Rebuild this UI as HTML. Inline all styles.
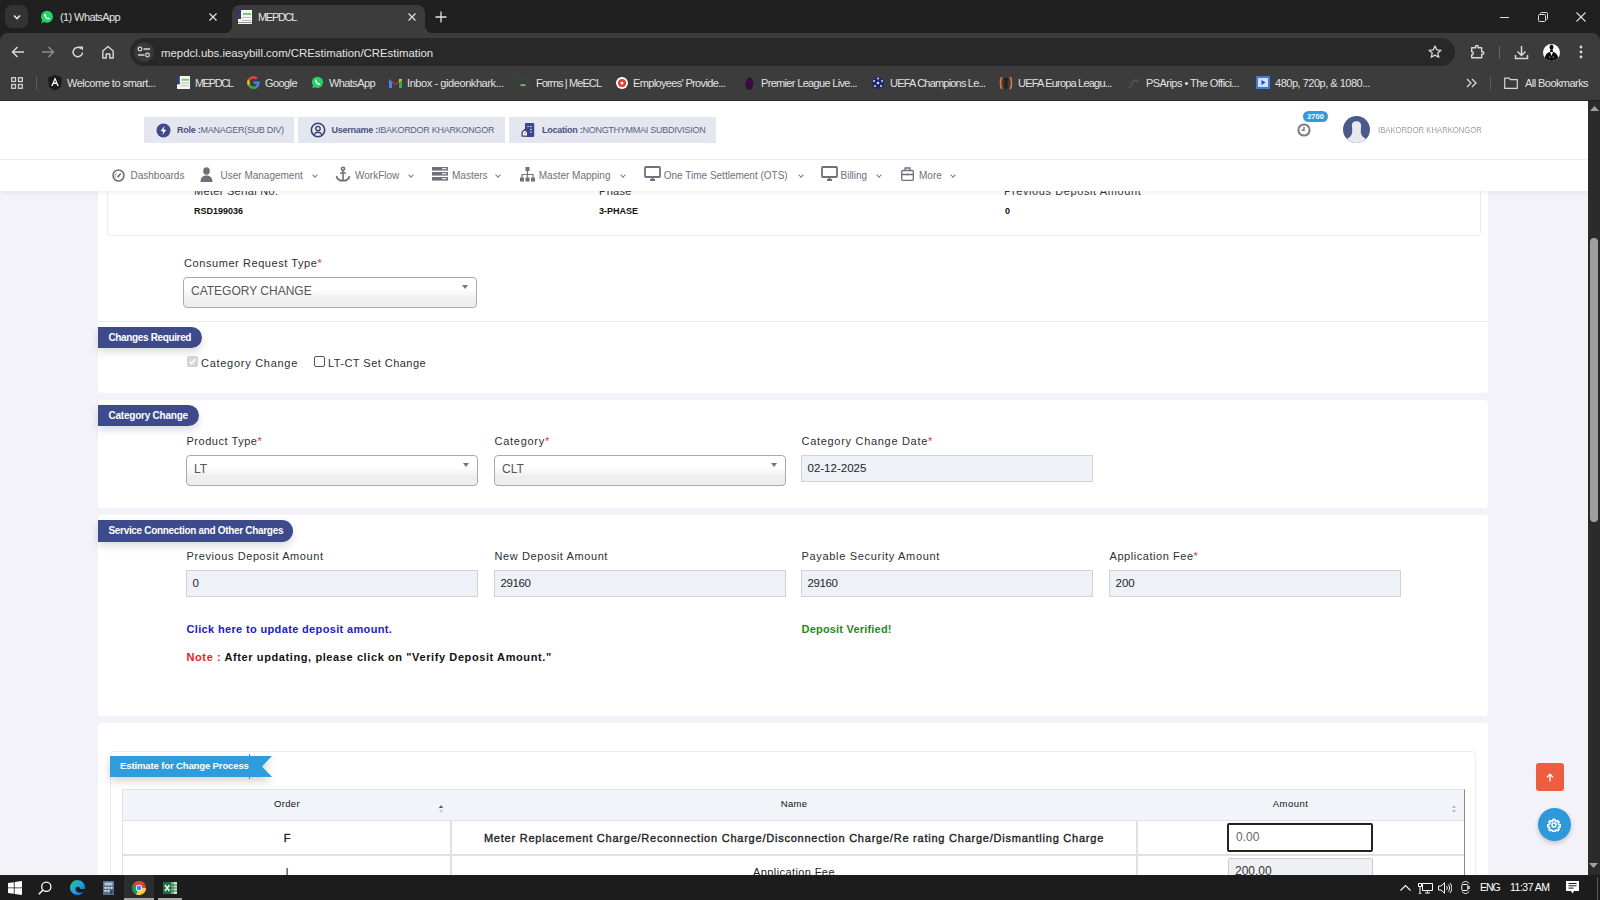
<!DOCTYPE html>
<html><head><meta charset="utf-8">
<style>
*{margin:0;padding:0;box-sizing:border-box}
html,body{width:1600px;height:900px;overflow:hidden;background:#202020;font-family:"Liberation Sans",sans-serif}
.a{position:absolute}
#tabs{left:0;top:0;width:1600px;height:33px;background:#202020}
#tool{left:0;top:33px;width:1600px;height:67px;background:#3c3c3c;border-radius:8px 8px 0 0}
.tt{color:#e3e3e3;font-size:11px;white-space:nowrap;line-height:16px}
.tx{color:#e0e0e0;font-size:11px;line-height:14px}
.bm{color:#e3e3e3;font-size:11px;white-space:nowrap;line-height:14px}
#page{left:0;top:100px;width:1588px;height:775px;background:#f3f2f8;overflow:hidden}
#sb{left:1588px;top:101px;width:12px;height:774px;background:#2b2b2b}
#task{left:0;top:875px;width:1600px;height:25px;background:#1c1c1c}
.card{position:absolute;background:#fff}
.lbl{position:absolute;font-size:11.5px;color:#2c3036;white-space:nowrap;line-height:14px}
.req{color:#e3342f}
.inp{position:absolute;background:#eef1f5;border:1px solid #ced4da;font-size:11.5px;color:#212529;padding-left:5.5px;white-space:nowrap}
.sel{position:absolute;background:linear-gradient(#fff 35%,#eeeeee 75%);border:1px solid #aaa;border-radius:4px;font-size:12px;color:#555;padding-left:7px;white-space:nowrap}
.pill{position:absolute;background:#3d4b8c;color:#fff;font-weight:bold;font-size:10px;border-radius:0 11px 11px 0;white-space:nowrap;box-shadow:0 4px 8px rgba(0,0,0,.15)}
.nav{position:absolute;font-size:10px;color:#6e717c;white-space:nowrap;line-height:14px}
.caret{width:0;height:0;border-left:3px solid transparent;border-right:3px solid transparent;border-top:4.5px solid #777}
.cb{width:11px;height:11px;border:1px solid #555;border-radius:2px;background:#fff}
.cb.dis{border-color:#d0d0d0;background:#d6d6d6}
.ribbon{background:#2f9ddc;clip-path:polygon(0 0,100% 0,93.8% 50%,100% 100%,0 100%)}
.th{font-size:9.5px;color:#1a1a1a;-webkit-text-stroke:0.05px #111;text-align:center;line-height:14px;letter-spacing:0.3px}
.td{font-size:11px;color:#222;text-align:center;line-height:16px;white-space:nowrap}
.sort{width:5px;height:9px;background:linear-gradient(#555 0 30%,transparent 30% 70%,#bbb 70%)}
.badge{top:117px;height:26px;background:#e5e7f0}
.bt{font-size:9px;color:#5a5f80;white-space:nowrap;line-height:14px}
.bt b{color:#4a5080}
.chev{width:4px;height:4px;border-right:1.1px solid #7a7d88;border-bottom:1.1px solid #7a7d88;transform:rotate(45deg)}
</style></head><body>
<!-- TAB STRIP -->
<div id="tabs" class="a"></div>
<div class="a" style="left:5px;top:5px;width:23px;height:23px;border-radius:7px;background:#333"></div>
<svg class="a" style="left:11px;top:11px" width="12" height="12" viewBox="0 0 12 12"><path d="M3 4.5l3 3 3-3" stroke="#e8e8e8" stroke-width="1.6" fill="none"/></svg>
<!-- whatsapp tab -->
<svg class="a" style="left:40px;top:10px" width="14" height="14" viewBox="0 0 14 14"><circle cx="7" cy="6.8" r="6" fill="#25d366"/><path d="M1.2 13.2l1.2-3.2 2 2z" fill="#25d366"/><path d="M4.6 4.2c.4-.6.9-.5 1.1 0l.5 1c.1.3-.3.6-.4.8.4.9 1.2 1.6 2 2 .2-.2.5-.6.8-.5l1 .5c.4.2.4.7 0 1.1-.6.6-1.5.6-2.4.1-1.2-.7-2.2-1.7-2.8-2.9-.3-.8-.3-1.5.2-2.1z" fill="#fff"/></svg>
<div class="a tt" style="left:60px;top:9px;letter-spacing:-0.6px">(1) WhatsApp</div>
<svg class="a" style="left:209px;top:13px" width="8" height="8" viewBox="0 0 8 8"><path d="M.5 .5l7 7M7.5 .5l-7 7" stroke="#e0e0e0" stroke-width="1.2"/></svg>
<!-- active tab -->
<div class="a" style="left:232px;top:5px;width:193px;height:29px;border-radius:8px 8px 0 0;background:#3c3c3c"></div>
<div class="a" style="left:224px;top:25px;width:8px;height:8px;background:radial-gradient(circle at 0 0,#202020 8px,#3c3c3c 8.5px)"></div>
<div class="a" style="left:425px;top:25px;width:8px;height:8px;background:radial-gradient(circle at 8px 0,#202020 8px,#3c3c3c 8.5px)"></div>
<svg class="a" style="left:238px;top:10px" width="14" height="14" viewBox="0 0 14 14"><rect x="0" y="0" width="14" height="14" fill="#f4f4f0"/><rect x="0" y="0" width="3" height="9" fill="#2a3a7a"/><rect x="5" y="3" width="8" height="2" fill="#7cc46a"/><rect x="4" y="7" width="9" height="1" fill="#bbb"/><rect x="4" y="10" width="9" height="1" fill="#bbb"/><rect x="0" y="12" width="14" height="1" fill="#999"/></svg>
<div class="a tt" style="left:258px;top:9px;color:#e8e8e8;letter-spacing:-1.3px">MEPDCL</div>
<svg class="a" style="left:408px;top:13px" width="8" height="8" viewBox="0 0 8 8"><path d="M.5 .5l7 7M7.5 .5l-7 7" stroke="#e0e0e0" stroke-width="1.2"/></svg>
<svg class="a" style="left:435px;top:11px" width="12" height="12" viewBox="0 0 12 12"><path d="M6 .5v11M.5 6h11" stroke="#e3e3e3" stroke-width="1.3"/></svg>
<!-- window controls -->
<div class="a" style="left:1500px;top:17px;width:9px;height:1px;background:#ddd"></div>
<svg class="a" style="left:1538px;top:12px" width="10" height="10" viewBox="0 0 10 10"><rect x="0.5" y="2.5" width="7" height="7" rx="1" stroke="#ddd" fill="none"/><path d="M2.5 2.5v-1a1 1 0 0 1 1-1h5a1 1 0 0 1 1 1v5a1 1 0 0 1-1 1h-1" stroke="#ddd" fill="none"/></svg>
<svg class="a" style="left:1576px;top:12px" width="10" height="10" viewBox="0 0 10 10"><path d="M.5 .5l9 9M9.5 .5l-9 9" stroke="#ddd" stroke-width="1.1"/></svg>
<!-- TOOLBAR -->
<div id="tool" class="a"></div>
<svg class="a" style="left:11px;top:46px" width="14" height="12" viewBox="0 0 14 12"><path d="M13 6H1.5M6.5 1L1.5 6l5 5" stroke="#d8d8d8" stroke-width="1.5" fill="none"/></svg>
<svg class="a" style="left:41px;top:46px" width="14" height="12" viewBox="0 0 14 12"><path d="M1 6h11.5M7.5 1l5 5-5 5" stroke="#8a8a8a" stroke-width="1.5" fill="none"/></svg>
<svg class="a" style="left:71px;top:45px" width="14" height="14" viewBox="0 0 14 14"><path d="M11.5 7.5A4.7 4.7 0 1 1 10 3.6" stroke="#d8d8d8" stroke-width="1.5" fill="none"/><path d="M8 1.5h4v4z" fill="#d8d8d8"/></svg>
<svg class="a" style="left:101px;top:45px" width="14" height="14" viewBox="0 0 14 14"><path d="M1.8 13V6L7 1.5 12.2 6v7H8.8V9H5.2v4z" stroke="#d8d8d8" stroke-width="1.4" fill="none" stroke-linejoin="round"/></svg>
<div class="a" style="left:130px;top:38px;width:1325px;height:28px;border-radius:14px;background:#282828"></div>
<div class="a" style="left:134px;top:42px;width:20px;height:20px;border-radius:10px;background:#3a3a3a"></div>
<svg class="a" style="left:137px;top:46px" width="14" height="12" viewBox="0 0 14 12"><circle cx="3" cy="3" r="1.8" stroke="#d8d8d8" stroke-width="1.2" fill="none"/><path d="M6.5 3H13M1 9h6.5" stroke="#d8d8d8" stroke-width="1.4"/><circle cx="10.5" cy="9" r="1.8" stroke="#d8d8d8" stroke-width="1.2" fill="none"/></svg>
<div class="a" id="url" style="left:161px;top:46.5px;font-size:11.4px;color:#e3e3e3;white-space:nowrap">mepdcl.ubs.ieasybill.com/CREstimation/CREstimation</div>
<svg class="a" style="left:1428px;top:45px" width="14" height="14" viewBox="0 0 14 14"><path d="M7 1l1.8 3.9 4.2.4-3.2 2.8 1 4.2L7 10.1 3.2 12.3l1-4.2L1 5.3l4.2-.4z" stroke="#d8d8d8" stroke-width="1.3" fill="none" stroke-linejoin="round"/></svg>
<svg class="a" style="left:1470px;top:45px" width="15" height="14" viewBox="0 0 15 14"><path d="M1.7 2.8h4V1.4a1.2 1.2 0 0 1 2.4 0v1.4h3.6v3.9h.8a1.3 1.3 0 0 1 0 2.6h-.8v3.5H1.7V9.8c1 .2 1.6-.5 1.6-1.5S2.7 6.6 1.7 6.9z" stroke="#d8d8d8" stroke-width="1.4" fill="none" stroke-linejoin="round"/></svg>
<div class="a" style="left:1499px;top:46px;width:1px;height:13px;background:#666"></div>
<svg class="a" style="left:1514px;top:45px" width="15" height="15" viewBox="0 0 15 15"><path d="M7.5 1v9M3.5 6.5l4 4 4-4M1.5 10v3.5h12V10" stroke="#d8d8d8" stroke-width="1.5" fill="none"/></svg>
<svg class="a" style="left:1543px;top:44px" width="17" height="17" viewBox="0 0 17 17"><defs><clipPath id="av"><circle cx="8.5" cy="8.5" r="8.5"/></clipPath></defs><circle cx="8.5" cy="8.5" r="8.5" fill="#fff"/><g clip-path="url(#av)" fill="#0c0c0c"><ellipse cx="8.5" cy="3.2" rx="1.9" ry="2.6"/><path d="M7.3 5.5h2.4l.3 2.5H7z"/><path d="M1.5 17c0-5 2-8.5 5.5-9l1.5 4 1.5-4c3.5.5 5.5 4 5.5 9z"/></g><circle cx="6.8" cy="13" r=".6" fill="#fff"/><circle cx="10.2" cy="13" r=".6" fill="#fff"/></svg>
<svg class="a" style="left:1579px;top:45px" width="4" height="14" viewBox="0 0 4 14"><circle cx="2" cy="2" r="1.4" fill="#d8d8d8"/><circle cx="2" cy="7" r="1.4" fill="#d8d8d8"/><circle cx="2" cy="12" r="1.4" fill="#d8d8d8"/></svg>
<!-- BOOKMARKS -->
<svg class="a" style="left:11px;top:77px" width="12" height="12" viewBox="0 0 12 12"><g stroke="#d0d0d0" stroke-width="1.3" fill="none"><rect x=".7" y=".7" width="3.8" height="3.8"/><rect x="7.5" y=".7" width="3.8" height="3.8"/><rect x=".7" y="7.5" width="3.8" height="3.8"/><rect x="7.5" y="7.5" width="3.8" height="3.8"/></g></svg>
<div class="a" style="left:36px;top:76px;width:1px;height:14px;background:#5a5a5a"></div>
<svg class="a" style="left:48px;top:75px" width="14" height="16" viewBox="0 0 14 16"><path d="M7 0l7 2.5-1 9.5L7 15.5 1 12 0 2.5z" fill="#1a1a1a"/><path d="M7 2.2L3.2 11h1.5l.8-2h3l.8 2h1.5zM6 7.6l1-2.6 1 2.6z" fill="#fff"/></svg>
<div class="a bm" style="left:67px;top:76px;letter-spacing:-0.48px">Welcome to smart...</div>
<svg class="a" style="left:177px;top:76px" width="13" height="13" viewBox="0 0 14 14"><rect x="0" y="0" width="14" height="14" fill="#f4f4f0"/><rect x="0" y="0" width="3" height="9" fill="#2a3a7a"/><rect x="5" y="3" width="8" height="2" fill="#7cc46a"/><rect x="4" y="7" width="9" height="1" fill="#bbb"/><rect x="4" y="10" width="9" height="1" fill="#bbb"/></svg>
<div class="a bm" style="left:195px;top:76px;letter-spacing:-1.4px">MEPDCL</div>
<svg class="a" style="left:247px;top:76px" width="13" height="13" viewBox="0 0 14 14"><path d="M13.6 7.2c0-.5 0-.9-.1-1.3H7v2.5h3.7a3.2 3.2 0 0 1-1.4 2.1v1.7h2.2c1.3-1.2 2.1-3 2.1-5z" fill="#4285f4"/><path d="M7 14c1.9 0 3.4-.6 4.5-1.7L9.3 10.6c-.6.4-1.4.7-2.3.7-1.8 0-3.3-1.2-3.9-2.9H.9v1.8A7 7 0 0 0 7 14z" fill="#34a853"/><path d="M3.1 8.4a4.2 4.2 0 0 1 0-2.8V3.8H.9a7 7 0 0 0 0 6.4z" fill="#fbbc05"/><path d="M7 2.8c1 0 1.9.4 2.6 1l2-2A7 7 0 0 0 .9 3.8l2.2 1.8C3.7 4 5.2 2.8 7 2.8z" fill="#ea4335"/></svg>
<div class="a bm" style="left:265px;top:76px;letter-spacing:-0.58px">Google</div>
<svg class="a" style="left:311px;top:76px" width="13" height="13" viewBox="0 0 14 14"><circle cx="7" cy="6.8" r="6" fill="#25d366"/><path d="M1.2 13.2l1.2-3.2 2 2z" fill="#25d366"/><path d="M4.6 4.2c.4-.6.9-.5 1.1 0l.5 1c.1.3-.3.6-.4.8.4.9 1.2 1.6 2 2 .2-.2.5-.6.8-.5l1 .5c.4.2.4.7 0 1.1-.6.6-1.5.6-2.4.1-1.2-.7-2.2-1.7-2.8-2.9-.3-.8-.3-1.5.2-2.1z" fill="#fff"/></svg>
<div class="a bm" style="left:329px;top:76px;letter-spacing:-0.6px">WhatsApp</div>
<svg class="a" style="left:389px;top:78px" width="13" height="10" viewBox="0 0 13 10"><path d="M0 10V1l6.5 5L13 1v9h-3V4.5L6.5 7 3 4.5V10z" fill="#ea4335"/><path d="M0 1v9h3V4.5z" fill="#4285f4"/><path d="M13 1v9h-3V4.5z" fill="#34a853"/><path d="M10 1v3.5L13 2V1z" fill="#fbbc05"/></svg>
<div class="a bm" style="left:407px;top:76px;letter-spacing:-0.42px">Inbox - gideonkhark...</div>
<svg class="a" style="left:517px;top:77px" width="12" height="12" viewBox="0 0 12 12"><circle cx="6" cy="6" r="5.4" stroke="#1e5a2a" stroke-width="1.1" fill="none"/><rect x="3.5" y="7.5" width="5" height="1.2" fill="#ccc"/></svg>
<div class="a bm" style="left:536px;top:76px;letter-spacing:-0.9px">Forms | MeECL</div>
<svg class="a" style="left:616px;top:77px" width="12" height="12" viewBox="0 0 12 12"><circle cx="6" cy="6" r="6" fill="#fff"/><circle cx="6" cy="6" r="4" fill="#e53935"/><circle cx="6" cy="6" r="1.5" fill="#fff"/></svg>
<div class="a bm" style="left:633px;top:76px;letter-spacing:-0.65px">Employees' Provide...</div>
<svg class="a" style="left:744px;top:76px" width="11" height="14" viewBox="0 0 11 14"><path d="M5.5 1C9 3 10 7 9 10s-3 4-3.5 4S2 13 1.5 10 2 3 5.5 1z" fill="#3a0b3f"/></svg>
<div class="a bm" style="left:761px;top:76px;letter-spacing:-0.67px">Premier League Live...</div>
<svg class="a" style="left:871px;top:76px" width="14" height="14" viewBox="0 0 14 14"><circle cx="7" cy="7" r="6" fill="#1b2a6b"/><g fill="#d8d8ff"><circle cx="7" cy="2.5" r="1"/><circle cx="11" cy="5" r="1"/><circle cx="10" cy="10" r="1"/><circle cx="4" cy="10" r="1"/><circle cx="3" cy="5" r="1"/><circle cx="7" cy="7" r="1.3"/></g></svg>
<div class="a bm" style="left:890px;top:76px;letter-spacing:-0.8px">UEFA Champions Le...</div>
<svg class="a" style="left:999px;top:76px" width="14" height="14" viewBox="0 0 14 14"><path d="M3 1C1 3 1 11 3 13M11 1c2 2 2 10 0 12" stroke="#e8772e" stroke-width="1.6" fill="none"/><path d="M5 2h4l-.5 7h1L8 13H6L4.5 9h1z" fill="#222"/></svg>
<div class="a bm" style="left:1018px;top:76px;letter-spacing:-0.8px">UEFA Europa Leagu...</div>
<svg class="a" style="left:1127px;top:76px" width="14" height="14" viewBox="0 0 14 14"><path d="M2 12L7 4l3 2 2-3" stroke="#555" stroke-width="1.5" fill="none"/><circle cx="5" cy="10" r="2" fill="#444"/></svg>
<div class="a bm" style="left:1146px;top:76px;letter-spacing:-0.55px">PSArips • The Offici...</div>
<svg class="a" style="left:1256px;top:76px" width="14" height="13" viewBox="0 0 14 13"><rect x="0" y="0" width="14" height="13" fill="#3b7ed8"/><rect x="2" y="2" width="10" height="9" fill="#cfe0ff"/><path d="M5.5 4v5l4-2.5z" fill="#1d4fa0"/></svg>
<div class="a bm" style="left:1275px;top:76px;letter-spacing:-0.49px">480p, 720p, &amp; 1080...</div>
<svg class="a" style="left:1466px;top:78px" width="11" height="10" viewBox="0 0 11 10"><path d="M1 1l4 4-4 4M6 1l4 4-4 4" stroke="#d8d8d8" stroke-width="1.3" fill="none"/></svg>
<div class="a" style="left:1490px;top:76px;width:1px;height:14px;background:#5a5a5a"></div>
<svg class="a" style="left:1504px;top:77px" width="14" height="12" viewBox="0 0 14 12"><path d="M.7 1.2h4.5l1.3 1.5h6.8v8.6H.7z" stroke="#d8d8d8" stroke-width="1.2" fill="none" stroke-linejoin="round"/></svg>
<div class="a bm" style="left:1525px;top:76px;letter-spacing:-0.56px">All Bookmarks</div>
<div id="page" class="a"></div>
<!-- cards -->
<div class="card" style="left:98px;top:150px;width:1390px;height:171px"></div>
<div class="a" style="left:107px;top:150px;width:1374px;height:86px;border:1px solid #ececf1;border-radius:4px;background:#fff"></div>
<div class="lbl" style="left:194px;top:184px;font-size:11px;color:#333;letter-spacing:0.3px">Meter Serial No.</div>
<div class="lbl" style="left:599px;top:184px;font-size:11px;color:#333;letter-spacing:0.3px">Phase</div>
<div class="lbl" style="left:1004px;top:184px;font-size:11px;color:#333;letter-spacing:0.6px">Previous Deposit Amount</div>
<div class="lbl" style="left:194px;top:204px;font-size:9px;font-weight:bold;color:#111">RSD199036</div>
<div class="lbl" style="left:599px;top:204px;font-size:9px;font-weight:bold;color:#111">3-PHASE</div>
<div class="lbl" style="left:1005px;top:204px;font-size:9px;font-weight:bold;color:#111">0</div>
<div class="a" style="left:98px;top:321px;width:1390px;height:1px;background:#ebebf0"></div>

<div class="lbl" style="left:184px;top:256px;font-size:11px;letter-spacing:0.57px">Consumer Request Type<span class="req">*</span></div>
<div class="sel" style="left:183px;top:277px;width:294px;height:31px;line-height:27px">CATEGORY CHANGE</div>
<div class="a caret" style="left:462px;top:285px"></div>

<div class="card" style="left:98px;top:322px;width:1390px;height:71px;border-radius:0 0 4px 4px"></div>
<div class="pill" style="left:98px;top:327px;width:104px;height:21px;line-height:21px;padding-left:10.5px;letter-spacing:-0.36px">Changes Required</div>
<div class="a cb dis" style="left:187px;top:356px"></div><svg class="a" style="left:188px;top:357px" width="9" height="9" viewBox="0 0 9 9"><path d="M1.5 4.5l2 2 4-4.5" stroke="#fff" stroke-width="1.6" fill="none"/></svg>
<div class="lbl" style="left:201px;top:356px;font-size:11px;letter-spacing:0.72px">Category Change</div>
<div class="a cb" style="left:314px;top:356px"></div>
<div class="lbl" style="left:328px;top:356px;font-size:11px;letter-spacing:0.46px">LT-CT Set Change</div>

<div class="card" style="left:98px;top:400px;width:1390px;height:108px;border-radius:4px"></div>
<div class="pill" style="left:98px;top:405px;width:101px;height:21px;line-height:21px;padding-left:10.5px;letter-spacing:-0.23px">Category Change</div>
<div class="lbl" style="left:186.5px;top:434px;font-size:11px;letter-spacing:0.53px">Product Type<span class="req">*</span></div>
<div class="lbl" style="left:494.5px;top:434px;font-size:11px;letter-spacing:0.73px">Category<span class="req">*</span></div>
<div class="lbl" style="left:801.5px;top:434px;font-size:11px;letter-spacing:0.7px">Category Change Date<span class="req">*</span></div>
<div class="sel" style="left:186px;top:455px;width:292px;height:31px;line-height:27px">LT</div>
<div class="a caret" style="left:463px;top:463px"></div>
<div class="sel" style="left:494px;top:455px;width:292px;height:31px;line-height:27px">CLT</div>
<div class="a caret" style="left:771px;top:463px"></div>
<div class="inp" style="left:801px;top:455px;width:292px;height:27px;line-height:25px">02-12-2025</div>

<div class="card" style="left:98px;top:515px;width:1390px;height:201px;border-radius:4px"></div>
<div class="pill" style="left:98px;top:520px;width:195px;height:21.5px;line-height:21px;padding-left:10.5px;letter-spacing:-0.32px">Service Connection and Other Charges</div>
<div class="lbl" style="left:186.5px;top:549px;font-size:11px;letter-spacing:0.59px">Previous Deposit Amount</div>
<div class="lbl" style="left:494.5px;top:549px;font-size:11px;letter-spacing:0.6px">New Deposit Amount</div>
<div class="lbl" style="left:801.5px;top:549px;font-size:11px;letter-spacing:0.68px">Payable Security Amount</div>
<div class="lbl" style="left:1109.5px;top:549px;font-size:11px;letter-spacing:0.55px">Application Fee<span class="req">*</span></div>
<div class="inp" style="left:186px;top:570px;width:292px;height:27px;line-height:25px">0</div>
<div class="inp" style="left:494px;top:570px;width:292px;height:27px;line-height:25px;letter-spacing:-0.4px">29160</div>
<div class="inp" style="left:801px;top:570px;width:292px;height:27px;line-height:25px;letter-spacing:-0.4px">29160</div>
<div class="inp" style="left:1109px;top:570px;width:292px;height:27px;line-height:25px">200</div>
<div class="lbl" style="left:186.5px;top:622px;font-size:11px;font-weight:bold;color:#2020c8;letter-spacing:0.35px">Click here to update deposit amount.</div>
<div class="lbl" style="left:801.5px;top:622px;font-size:11px;font-weight:bold;color:#1e8a1e;letter-spacing:0.2px">Deposit Verified!</div>
<div class="lbl" style="left:186.5px;top:650px;font-size:11px;font-weight:bold;color:#111;letter-spacing:0.6px"><span style="color:#e81c1c">Note :</span> After updating, please click on "Verify Deposit Amount."</div>

<div class="card" style="left:98px;top:723px;width:1390px;height:160px;border-radius:4px"></div>
<div class="a" style="left:110px;top:751px;width:1366px;height:140px;border:1px solid #ececf0;border-radius:4px"></div>
<div class="a" style="left:110px;top:756px;width:162px;height:21px;filter:drop-shadow(0 4px 4px rgba(0,0,0,.18))"><div class="ribbon" style="width:162px;height:21px"></div></div><div class="a" style="left:249px;top:754px;width:1px;height:2px;background:#3a88b8"></div><div class="a" style="left:249px;top:777px;width:1px;height:2px;background:#3a88b8"></div>
<div class="a" style="left:120px;top:759px;font-size:9.5px;font-weight:bold;color:#fff;line-height:14px;white-space:nowrap;letter-spacing:-0.12px">Estimate for Change Process</div>
<!-- table -->
<div class="a" style="left:122px;top:789px;width:1343px;height:100px;border:1px solid #dee2e6;border-right:1px solid #888"></div>
<div class="a" style="left:123px;top:790px;width:1341px;height:31px;background:#f1f4f8;border-bottom:1px solid #dee2e6"></div>
<div class="a th" style="left:123px;top:797px;width:328px">Order</div>
<div class="a th" style="left:451px;top:797px;width:686px">Name</div>
<div class="a th" style="left:1127px;top:797px;width:327px;letter-spacing:0.5px">Amount</div>
<svg class="a" style="left:438px;top:803.5px" width="6" height="10" viewBox="0 0 6 10"><path d="M0.8 4l2.2-2.8L5.2 4z" fill="#555"/><path d="M0.8 6l2.2 2.8L5.2 6z" fill="#ccc"/></svg>
<svg class="a" style="left:1451px;top:804px" width="6" height="10" viewBox="0 0 6 10"><path d="M0.8 4l2.2-2.8L5.2 4z" fill="#bbb"/><path d="M0.8 6l2.2 2.8L5.2 6z" fill="#bbb"/></svg>
<div class="a" style="left:450px;top:821px;width:2px;height:60px;background:#dee2e6"></div>
<div class="a" style="left:1136px;top:821px;width:2px;height:60px;background:#dee2e6"></div>
<div class="a" style="left:123px;top:854px;width:1341px;height:2px;background:#dee2e6"></div>
<div class="a td" style="left:123px;top:830px;width:328px;-webkit-text-stroke:0.4px #222">F</div>
<div class="a td" style="left:451px;top:830px;width:686px;-webkit-text-stroke:0.35px #222;letter-spacing:0.77px">Meter Replacement Charge/Reconnection Charge/Disconnection Charge/Re rating Charge/Dismantling Charge</div>
<div class="a" style="left:1227px;top:823px;width:146px;height:29px;border:2px solid #222;border-radius:2px;background:#fff;font-size:12px;color:#666;line-height:25px;padding-left:7px">0.00</div>
<div class="a td" style="left:123px;top:864px;width:328px">I</div>
<div class="a td" style="left:451px;top:864px;width:686px;letter-spacing:0.4px">Application Fee</div>
<div class="a" style="left:1228px;top:858px;width:145px;height:29px;border:1px solid #ccc;border-radius:2px;background:#eef0f4;font-size:12px;color:#333;line-height:25px;padding-left:6px">200.00</div>

<!-- floating buttons -->
<div class="a" style="left:1536px;top:763px;width:28px;height:28px;border-radius:3px;background:#f05c40"></div>
<svg class="a" style="left:1546px;top:773px" width="8" height="9" viewBox="0 0 8 9"><path d="M4 8.5V1.5M1 4.3L4 1.2l3 3.1" stroke="#fff" stroke-width="1.3" fill="none"/></svg>
<div class="a" style="left:1538px;top:808px;width:33px;height:33px;border-radius:50%;background:#2e99da;box-shadow:0 2px 5px rgba(0,0,0,.2)"></div>
<svg class="a" style="left:1547px;top:818px" width="14" height="14" viewBox="0 0 24 24"><path fill="none" stroke="#fff" stroke-width="2.8" d="M12 8.5a3.5 3.5 0 1 0 0 7 3.5 3.5 0 0 0 0-7zM10.3 2.5h3.4l.5 2.6 1.8.9 2.3-1.4 2.4 2.4-1.4 2.3.8 1.8 2.6.5v3.4l-2.6.5-.8 1.8 1.4 2.3-2.4 2.4-2.3-1.4-1.8.8-.5 2.6h-3.4l-.5-2.6-1.8-.8-2.3 1.4-2.4-2.4 1.4-2.3-.8-1.8-2.6-.5v-3.4l2.6-.5.8-1.8-1.4-2.3 2.4-2.4 2.3 1.4 1.8-.9z"/></svg>

<!-- HEADER -->
<div class="a" style="left:0;top:100px;width:1588px;height:1px;background:#2e2e2e"></div><div class="a" style="left:0;top:101px;width:1588px;height:90px;background:#fff;box-shadow:0 2px 4px rgba(0,0,0,.06)"></div>
<div class="a" style="left:0;top:159px;width:1587px;height:1px;background:#ebedf0"></div>
<div class="a badge" style="left:144px;top:117px;width:150px"></div>
<div class="a badge" style="left:298px;top:117px;width:207px"></div>
<div class="a badge" style="left:509px;top:117px;width:207px"></div>
<svg class="a" style="left:156px;top:123px" width="15" height="15" viewBox="0 0 15 15"><circle cx="7.5" cy="7.5" r="7" fill="#3d4b8c"/><path d="M8.3 3L4.6 8.2h2.6L6.5 12l3.8-5.2H7.7z" fill="#fff"/></svg>
<div class="a bt" style="left:177px;top:123px;letter-spacing:-0.26px"><b>Role :</b>MANAGER(SUB DIV)</div>
<svg class="a" style="left:310px;top:122px" width="16" height="16" viewBox="0 0 16 16"><circle cx="8" cy="8" r="6.7" stroke="#3a4272" stroke-width="1.6" fill="none"/><circle cx="8" cy="6.6" r="2.2" stroke="#3a4272" stroke-width="1.4" fill="none"/><path d="M3.8 12.9c1-1.8 2.4-2.6 4.2-2.6s3.2.8 4.2 2.6" stroke="#3a4272" stroke-width="1.4" fill="none"/></svg>
<div class="a bt" style="left:331.5px;top:123px;letter-spacing:-0.26px"><b>Username :</b>IBAKORDOR KHARKONGOR</div>
<svg class="a" style="left:521px;top:122px" width="14" height="16" viewBox="0 0 14 16"><rect x="4" y="1" width="9.2" height="14" rx="1" fill="#3b4590"/><g fill="#c9cfe8"><rect x="6.3" y="4" width="1.6" height="1.1"/><rect x="9" y="4" width="1.9" height="1.1"/><rect x="9" y="6.8" width="1.9" height="1.1"/><rect x="9" y="9.6" width="1.9" height="1.1"/></g><path d="M1.1 14.2V10.3L3.9 7.5 6.7 10.3V14.2z" fill="#fff" stroke="#3b4270" stroke-width="1.3" stroke-linejoin="round"/><rect x="3.5" y="10.6" width="0.9" height="1.4" fill="#3b4270"/></svg>
<div class="a bt" style="left:542px;top:123px;letter-spacing:-0.26px"><b>Location :</b>NONGTHYMMAI SUBDIVISION</div>
<!-- right header -->
<svg class="a" style="left:1297px;top:123px" width="14" height="14" viewBox="0 0 14 14"><circle cx="7" cy="7" r="5.6" stroke="#7a7c86" stroke-width="2" fill="none"/><path d="M7 3.8V7.3H4.6" stroke="#777a85" stroke-width="1.4" fill="none"/></svg>
<div class="a" style="left:1303px;top:111px;width:25px;height:11px;border-radius:6px;background:#2e9be0;color:#fff;font-size:7.5px;font-weight:bold;text-align:center;line-height:11px">2700</div>
<svg class="a" style="left:1343px;top:116px" width="27" height="27" viewBox="0 0 27 27"><defs><clipPath id="cc"><circle cx="13.5" cy="13.5" r="13.5"/></clipPath></defs><circle cx="13.5" cy="13.5" r="13.5" fill="#4a5a8c"/><g clip-path="url(#cc)" fill="#e6e9ee"><path d="M8.9 10C8.9 6.5 10.8 5.2 13.5 5.2S18.1 6.5 18.1 10L17.8 14C17.6 17.5 18.3 19.5 20.5 21.2L26 25V28H1V25L6.5 21.2C8.7 19.5 9.4 17.5 9.2 14z"/></g></svg>
<div class="a" style="left:1377.5px;top:123px;font-size:9.5px;color:#9a9ca8;white-space:nowrap;line-height:14px;transform:scaleX(0.81);transform-origin:0 0">IBAKORDOR KHARKONGOR</div>
<!-- nav -->
<svg class="a" style="left:112px;top:168.5px" width="13" height="13" viewBox="0 0 13 13"><circle cx="6.5" cy="6.5" r="5.5" stroke="#6e717c" stroke-width="1.6" fill="none"/><path d="M3.3 8.8a3.4 3.4 0 0 1 1.8-4.6" stroke="#9a9ca6" stroke-width="1" fill="none"/><path d="M6.3 7.3l2.4-2.8" stroke="#5d606b" stroke-width="1.4"/><circle cx="6.3" cy="7.5" r="1.1" fill="#5d606b"/></svg>
<div class="nav" style="left:130.5px;top:168.5px">Dashboards</div>
<svg class="a" style="left:200px;top:167px" width="13" height="15" viewBox="0 0 13 15"><ellipse cx="6.5" cy="4" rx="3.3" ry="3.8" fill="#6e717c"/><path d="M0.5 15c0-4 2.2-6.5 6-6.5s6 2.5 6 6.5z" fill="#6e717c"/></svg>
<div class="nav" style="left:220.5px;top:168.5px">User Management</div>
<div class="a chev" style="left:312.5px;top:173px"></div>
<svg class="a" style="left:335px;top:166px" width="16" height="16" viewBox="0 0 16 16"><g stroke="#6e717c" stroke-width="1.6" fill="none"><circle cx="8" cy="2.8" r="1.6"/><path d="M8 4.4v10.5M5 7h6M1.5 10c.5 3 3 4.8 6.5 4.8s6-1.8 6.5-4.8"/></g></svg>
<div class="nav" style="left:355px;top:168.5px">WorkFlow</div>
<div class="a chev" style="left:408.5px;top:173px"></div>
<svg class="a" style="left:432px;top:167px" width="16" height="14" viewBox="0 0 16 14"><g fill="#6e717c"><rect x="0" y="0" width="16" height="3.6"/><rect x="0" y="5" width="16" height="3.6"/><rect x="0" y="10" width="16" height="3.6"/></g><g fill="#fff"><rect x="10" y="1.2" width="4.5" height="1"/><rect x="10" y="6.2" width="4.5" height="1"/><rect x="10" y="11.2" width="4.5" height="1"/></g></svg>
<div class="nav" style="left:452px;top:168.5px">Masters</div>
<div class="a chev" style="left:495.5px;top:173px"></div>
<svg class="a" style="left:520px;top:167px" width="15" height="15" viewBox="0 0 15 15"><g fill="#6e717c"><rect x="5.5" y="0" width="4" height="4"/><rect x="0" y="10.5" width="4" height="4"/><rect x="5.5" y="10.5" width="4" height="4"/><rect x="11" y="10.5" width="4" height="4"/></g><path d="M7.5 4v6.5M2 10.5V7.5h11v3" stroke="#6e717c" stroke-width="1.2" fill="none"/></svg>
<div class="nav" style="left:538.75px;top:168.5px">Master Mapping</div>
<div class="a chev" style="left:620.5px;top:173px"></div>
<svg class="a" style="left:644px;top:166px" width="17" height="15" viewBox="0 0 17 15"><rect x="1" y="1" width="15" height="10" rx="1" stroke="#6e717c" stroke-width="1.8" fill="none"/><path d="M6 14h5M8.5 11v3" stroke="#6e717c" stroke-width="2"/></svg>
<div class="nav" style="left:663.75px;top:168.5px">One Time Settlement (OTS)</div>
<div class="a chev" style="left:798.5px;top:173px"></div>
<svg class="a" style="left:821px;top:166px" width="17" height="15" viewBox="0 0 17 15"><rect x="1" y="1" width="15" height="10" rx="1" stroke="#6e717c" stroke-width="1.8" fill="none"/><path d="M6 14h5M8.5 11v3" stroke="#6e717c" stroke-width="2"/></svg>
<div class="nav" style="left:840.5px;top:168.5px">Billing</div>
<div class="a chev" style="left:876.5px;top:173px"></div>
<svg class="a" style="left:901px;top:167px" width="13" height="14" viewBox="0 0 13 14"><g stroke="#6e717c" stroke-width="1.3" fill="none"><rect x=".7" y="3.5" width="11.6" height="9.8" rx="1"/><path d="M4 3.5V1h5v2.5M.7 7.5h11.6M6.5 6.5v2"/></g></svg>
<div class="nav" style="left:919px;top:168.5px">More</div>
<div class="a chev" style="left:950.5px;top:173px"></div>
<div id="sb" class="a"></div>
<svg class="a" style="left:1589.5px;top:105px" width="9" height="6" viewBox="0 0 9 6"><path d="M0 6l4.5-5L9 6z" fill="#a0a0a0"/></svg>
<div class="a" style="left:1590px;top:238px;width:8px;height:284px;border-radius:4px;background:#9f9f9f"></div>
<svg class="a" style="left:1589px;top:863px" width="9" height="6" viewBox="0 0 9 6"><path d="M0 0l4.5 5L9 0z" fill="#a0a0a0"/></svg>
<div id="task" class="a"></div>
<svg class="a" style="left:8px;top:881px" width="14" height="14" viewBox="0 0 14 14"><path d="M0 2l5.8-.8v5.3H0zM6.6 1.1L14 0v6.5H6.6zM0 7.3h5.8v5.5L0 12zM6.6 7.3H14V14l-7.4-1z" fill="#fff"/></svg>
<svg class="a" style="left:38px;top:881px" width="14" height="14" viewBox="0 0 14 14"><circle cx="8.3" cy="5.7" r="4.6" stroke="#fff" stroke-width="1.3" fill="none"/><path d="M5 9L.8 13.2" stroke="#fff" stroke-width="1.5"/></svg>
<svg class="a" style="left:70px;top:880px" width="15" height="15" viewBox="0 0 15 15"><defs><linearGradient id="eg" x1="0" y1="0" x2="1" y2="1"><stop offset="0" stop-color="#39c46b"/><stop offset=".5" stop-color="#1ea2e0"/><stop offset="1" stop-color="#0b63c4"/></linearGradient></defs><path d="M7.5 0A7.5 7.5 0 0 0 0 7.5C0 11.6 3.4 15 7.5 15c2.5 0 4.7-1.2 6-3.1-1 .5-2.2.8-3.4.8-2.7 0-4.6-1.7-4.6-3.7 0-1.3 1-2.3 2.3-2.3 1.7 0 2.4 1.3 2.4 2.4h4.6A7.5 7.5 0 0 0 7.5 0z" fill="url(#eg)"/></svg>
<svg class="a" style="left:103px;top:881px" width="11" height="14" viewBox="0 0 11 14"><rect width="11" height="14" fill="#5a6f8c"/><rect x="1.5" y="1.5" width="8" height="3" fill="#aac4e0"/><g fill="#dfe6ee"><rect x="1.5" y="6" width="2" height="1.8"/><rect x="4.5" y="6" width="2" height="1.8"/><rect x="7.5" y="6" width="2" height="1.8"/><rect x="1.5" y="9" width="2" height="1.8"/><rect x="4.5" y="9" width="2" height="1.8"/></g><rect x="7.5" y="9" width="2" height="4" fill="#1a3f7a"/></svg>
<div class="a" style="left:124px;top:875px;width:30px;height:25px;background:#2d2d2d"></div>
<div class="a" style="left:124px;top:898px;width:30px;height:2px;background:#a8a8a8"></div>
<svg class="a" style="left:132px;top:881px" width="14" height="14" viewBox="0 0 14 14"><circle cx="7" cy="7" r="7" fill="#db4437"/><path d="M7 7L1 3.5A7 7 0 0 0 4.2 13.4z" fill="#0f9d58"/><path d="M7 7l-2.8 6.4A7 7 0 0 0 14 7z" fill="#ffcd40"/><path d="M7 3.5h6.2A7 7 0 0 0 1 3.5z" fill="#db4437"/><circle cx="7" cy="7" r="3.2" fill="#fff"/><circle cx="7" cy="7" r="2.4" fill="#4285f4"/></svg>
<div class="a" style="left:158px;top:898px;width:24px;height:2px;background:#a8a8a8"></div>
<svg class="a" style="left:163px;top:881px" width="14" height="14" viewBox="0 0 14 14"><rect x="6" y="1" width="8" height="12" fill="#c8e6cf"/><g stroke="#1d6f42" stroke-width=".9"><path d="M6 4h8M6 7h8M6 10h8M10 1v12"/></g><rect x="0" y="1" width="8.5" height="12" fill="#1d6f42"/><path d="M2 4l4.5 6M6.5 4L2 10" stroke="#fff" stroke-width="1.4"/></svg>
<svg class="a" style="left:1400px;top:884px" width="11" height="7" viewBox="0 0 11 7"><path d="M.5 6.5l5-5 5 5" stroke="#fff" stroke-width="1.1" fill="none"/></svg>
<svg class="a" style="left:1418px;top:882px" width="15" height="12" viewBox="0 0 15 12"><path d="M4.5 1.5h10v7h-10z" stroke="#fff" stroke-width="1" fill="none"/><path d="M9.5 8.5v2M7 11h5" stroke="#fff"/><path d="M.5 1.5h3v3h-3zM2 4.5V12M.5 12h3" stroke="#fff" stroke-width="1" fill="none"/></svg>
<svg class="a" style="left:1438px;top:882px" width="14" height="12" viewBox="0 0 14 12"><path d="M.5 4h2.5L6.5.8v10.4L3 8H.5z" stroke="#fff" stroke-width="1" fill="none"/><path d="M8.5 4.2a2.5 2.5 0 0 1 0 3.6M10.2 2.5a5 5 0 0 1 0 7M11.9 1a7.2 7.2 0 0 1 0 10" stroke="#fff" stroke-width="1" fill="none"/></svg>
<svg class="a" style="left:1461px;top:881px" width="10" height="13" viewBox="0 0 10 13"><path d="M1 2.5a4 4 0 0 1 7 0M1 10.5a4 4 0 0 0 7 0" stroke="#fff" stroke-width=".9" fill="none"/><rect x=".8" y="3.5" width="6" height="6" rx="1" stroke="#fff" stroke-width="1" fill="none"/><path d="M8 5v3" stroke="#fff" stroke-width="1.2"/></svg>
<div class="a" style="left:1480px;top:880px;font-size:10.5px;color:#fff;line-height:14px;letter-spacing:-1px">ENG</div>
<div class="a" style="left:1510px;top:880px;font-size:10.5px;color:#fff;line-height:14px;letter-spacing:-0.5px;white-space:nowrap">11:37 AM</div>
<svg class="a" style="left:1566px;top:881px" width="13" height="13" viewBox="0 0 13 13"><path d="M0 0h13v10H8l-1.5 2.5L5 10H0z" fill="#fff"/><path d="M2.5 2.5h8M2.5 4.8h8M2.5 7.1h5" stroke="#1c1c1c" stroke-width="1"/></svg>
<div class="a" style="left:1597px;top:877px;width:1px;height:23px;background:#5a5a5a"></div>
</body></html>
